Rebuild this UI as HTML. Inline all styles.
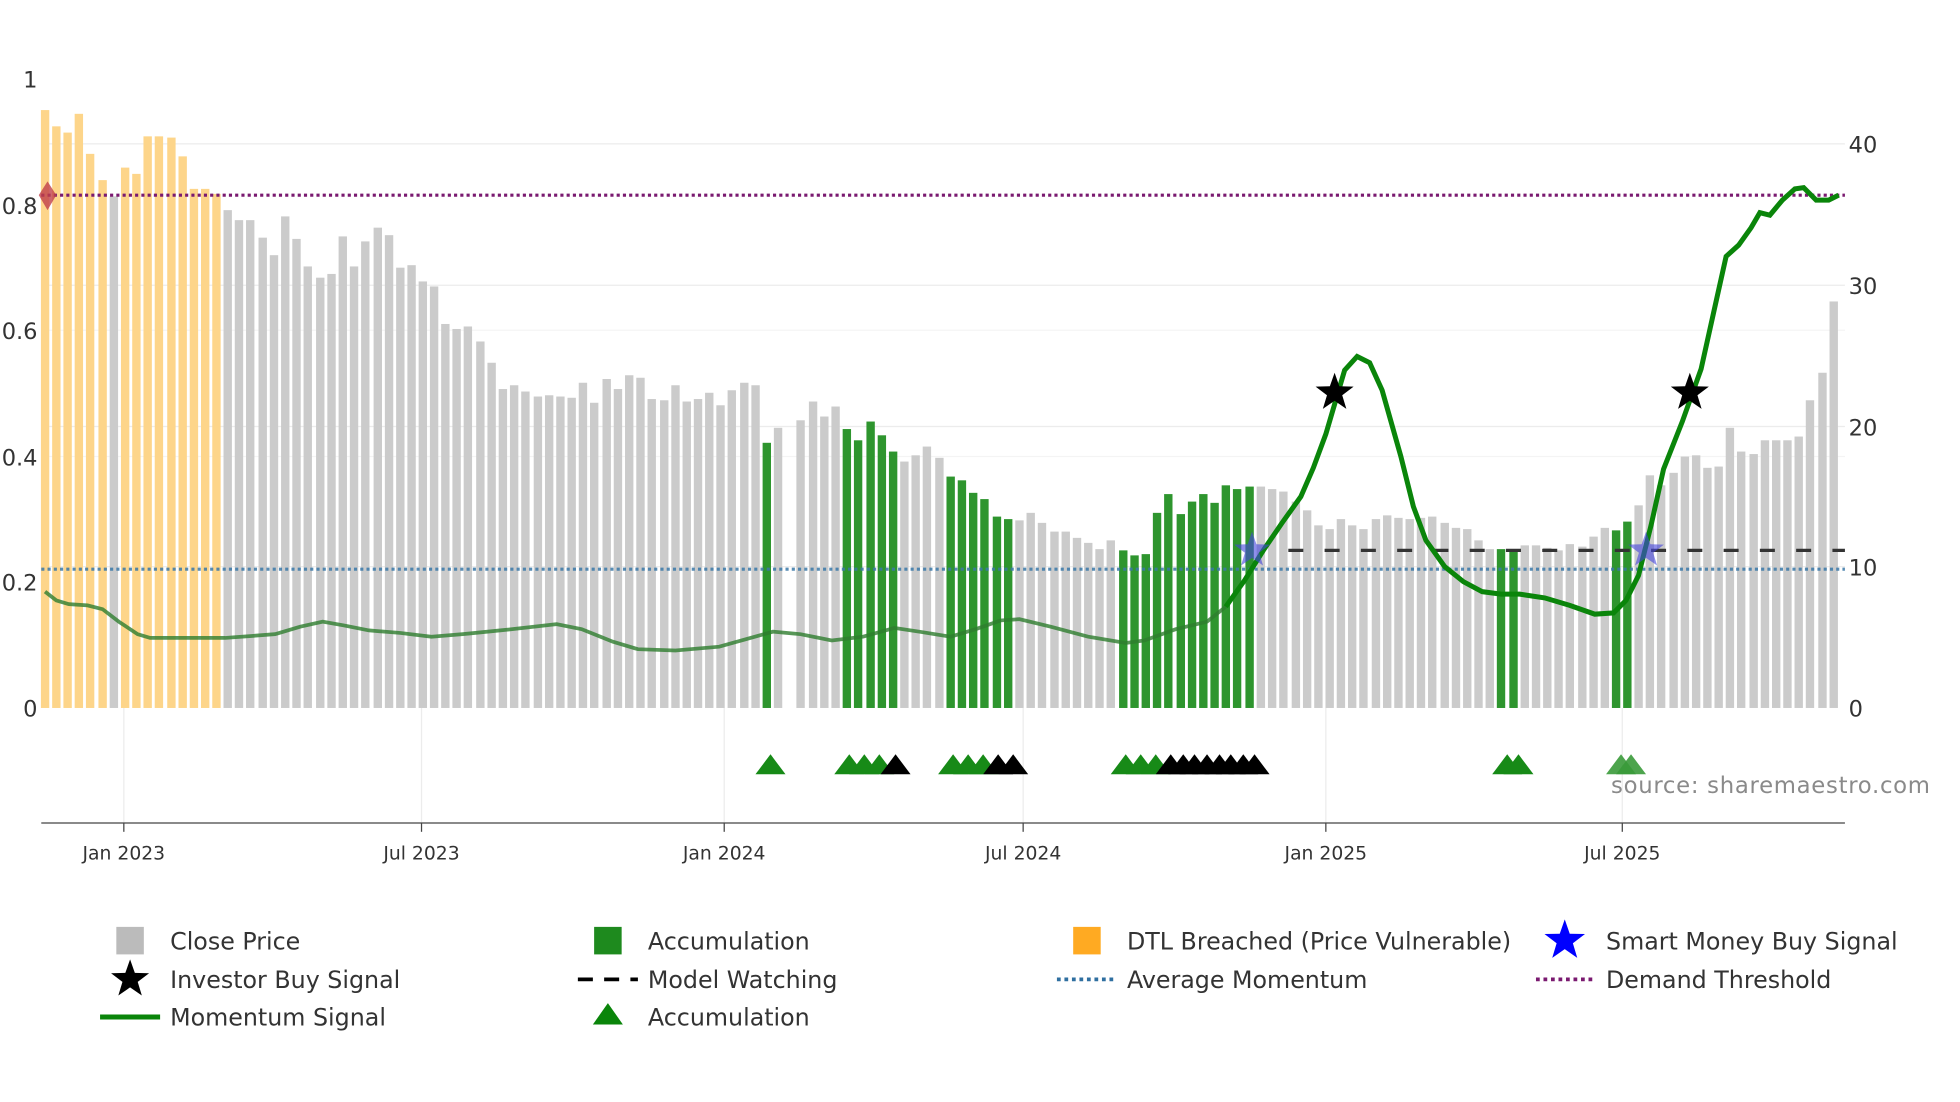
<!DOCTYPE html>
<html><head><meta charset="utf-8"><style>
html,body{margin:0;padding:0;background:#fff;width:1960px;height:1102px;overflow:hidden}
svg{display:block;font-family:"DejaVu Sans","Liberation Sans",sans-serif}
</style></head><body>
<svg id="s" width="1960" height="1102" viewBox="0 0 1567 881" preserveAspectRatio="none" xmlns="http://www.w3.org/2000/svg">
<g stroke="#ececec" stroke-width="1">
<line x1="33" y1="453" x2="1475" y2="453"/><line x1="33" y1="341" x2="1475" y2="341"/>
<line x1="33" y1="228" x2="1475" y2="228"/><line x1="33" y1="115" x2="1475" y2="115"/>
<line x1="33" y1="365" x2="1475" y2="365" stroke="#f4f4f4"/><line x1="33" y1="264" x2="1475" y2="264" stroke="#f4f4f4"/>
<line x1="99" y1="566" x2="99" y2="658"/><line x1="337" y1="566" x2="337" y2="658"/><line x1="579" y1="566" x2="579" y2="658"/>
<line x1="818" y1="566" x2="818" y2="658"/><line x1="1060" y1="566" x2="1060" y2="658"/><line x1="1297" y1="566" x2="1297" y2="658"/>
</g>
<g id="bars"></g>
<line x1="33" y1="455" x2="1475" y2="455" stroke="#3a78a8" stroke-width="2.5" stroke-dasharray="2.5,2.5" opacity="0.85"/>
<line x1="1030" y1="440" x2="1475" y2="440" stroke="#333" stroke-width="2.5" stroke-dasharray="12,17"/>
<line x1="33" y1="156" x2="1475" y2="156" stroke="#7a1a70" stroke-width="2.5" stroke-dasharray="2.5,2.5"/>
<path id="m1" fill="none" stroke="#2e7d2e" stroke-width="3" opacity="0.8"/>
<path id="m2" fill="none" stroke="#0a850a" stroke-width="4"/>
<path d="M38,145 L45,156 L38,168 L31,156Z" fill="#c0404a" opacity="0.8"/>
<g id="stars"></g>
<g id="tri"></g>
<line x1="33" y1="658" x2="1475" y2="658" stroke="#444" stroke-width="1"/>
<g stroke="#444"><line x1="99" y1="658" x2="99" y2="665"/><line x1="337" y1="658" x2="337" y2="665"/><line x1="579" y1="658" x2="579" y2="665"/><line x1="818" y1="658" x2="818" y2="665"/><line x1="1060" y1="658" x2="1060" y2="665"/><line x1="1297" y1="658" x2="1297" y2="665"/></g>
<g font-size="15" fill="#333" text-anchor="middle">
<text x="99" y="687">Jan 2023</text><text x="337" y="687">Jul 2023</text><text x="579" y="687">Jan 2024</text>
<text x="818" y="687">Jul 2024</text><text x="1060" y="687">Jan 2025</text><text x="1297" y="687">Jul 2025</text>
</g>
<g font-size="18" fill="#333" text-anchor="end">
<text x="30" y="70">1</text><text x="30" y="171">0.8</text><text x="30" y="271">0.6</text><text x="30" y="372">0.4</text><text x="30" y="472">0.2</text><text x="30" y="573">0</text>
</g>
<g font-size="18" fill="#333">
<text x="1478" y="122">40</text><text x="1478" y="235">30</text><text x="1478" y="348">20</text><text x="1478" y="460">10</text><text x="1478" y="573">0</text>
</g>
<text x="1288" y="634" font-size="18.2" fill="#8a8a8a" textLength="255">source: sharemaestro.com</text>
<g font-size="19" fill="#333">
<rect x="93" y="741" width="22" height="22" fill="#bbb"/><text x="136" y="759">Close Price</text>
<rect x="475" y="741" width="22" height="22" fill="#1e8a1e"/><text x="518" y="759">Accumulation</text>
<rect x="858" y="741" width="22" height="22" fill="#ffaa22"/><text x="901" y="759">DTL Breached (Price Vulnerable)</text>
<text x="1284" y="759">Smart Money Buy Signal</text>
<text x="136" y="790">Investor Buy Signal</text>
<line x1="462" y1="783" x2="510" y2="783" stroke="#000" stroke-width="3" stroke-dasharray="12,9"/><text x="518" y="790">Model Watching</text>
<line x1="845" y1="783" x2="892" y2="783" stroke="#2f6fa0" stroke-width="3" stroke-dasharray="3,3"/><text x="901" y="790">Average Momentum</text>
<line x1="1228" y1="783" x2="1275" y2="783" stroke="#7a1a70" stroke-width="3" stroke-dasharray="3,3"/><text x="1284" y="790">Demand Threshold</text>
<line x1="80" y1="813" x2="128" y2="813" stroke="#0a850a" stroke-width="4"/><text x="136" y="820">Momentum Signal</text>
<path d="M474,819 L486,802 L498,819Z" fill="#0a850a"/><text x="518" y="820">Accumulation</text>
</g>
<g id="lstars"></g>
</svg>
<script>
var NS="http://www.w3.org/2000/svg";
function el(p,t,a){var e=document.createElementNS(NS,t);for(var k in a)e.setAttribute(k,a[k]);p.appendChild(e);return e;}
var d=[[36,88,'y'],[45,101,'y'],[54,106,'y'],[63,91,'y'],[72,123,'y'],[82,144,'y'],[91,157,'g'],[100,134,'y'],[109,139,'y'],[118,109,'y'],[127,109,'y'],[137,110,'y'],[146,125,'y'],[155,151,'y'],[164,151,'y'],[173,155,'y'],
[182,168],[191,176],[200,176],[210,190],[219,204],[228,173],[237,191],[246,213],[256,222],[265,219],[274,189],[283,213],[292,193],[302,182],[311,188],[320,214],[329,212],[338,225],[347,229],[356,259],[365,263],[374,261],[384,273],[393,290],[402,311],[411,308],[420,313],[430,317],[439,316],[448,317],[457,318],[466,306],[475,322],[485,303],[494,311],[503,300],[512,302],[521,319],[531,320],[540,308],[549,321],[558,319],[567,314],[576,324],[585,312],[595,306],[604,308],[613,354,'G'],[622,342],[640,336],[650,321],[659,333],[668,325],[677,343,'G'],[686,352,'G'],[696,337,'G'],[705,348,'G'],[714,361,'G'],[723,369],[732,364],[741,357],[751,366],[760,381,'G'],[769,384,'G'],[778,394,'G'],[787,399,'G'],[797,413,'G'],[806,415,'G'],[815,416],[824,410],[833,418],[843,425],[852,425],[861,430],[870,434],[879,439],[888,432],[898,440,'G'],[907,444,'G'],[916,443,'G'],[925,410,'G'],[934,395,'G'],[944,411,'G'],[953,401,'G'],[962,395,'G'],[971,402,'G'],[980,388,'G'],[989,391,'G'],[999,389,'G'],[1008,389],[1017,391],[1026,393],[1036,401],[1045,408],[1054,420],[1063,423],[1072,415],[1081,420],[1090,423],[1100,415],[1109,412],[1118,414],[1127,415],[1136,414],[1145,413],[1155,418],[1164,422],[1173,423],[1182,432],[1191,439],[1200,439,'G'],[1210,439,'G'],[1219,436],[1228,436],[1237,438],[1246,440],[1255,435],[1265,437],[1274,429],[1283,422],[1292,424,'G'],[1301,417,'G'],[1310,404],[1319,380],[1328,388],[1338,378],[1347,365],[1356,364],[1365,374],[1374,373],[1383,342],[1392,361],[1402,363],[1411,352],[1420,352],[1429,352],[1438,349],[1447,320],[1457,298],[1466,241]];
var b=document.getElementById('bars');
d.forEach(function(r){var c=r[2]=='y'?'#fdd58a':r[2]=='G'?'#2e952e':'#cbcbcb';el(b,'rect',{x:r[0]-3.3,y:r[1],width:6.7,height:566-r[1],fill:c});});
var pts=[[36,473],[45,480],[55,483],[70,484],[82,487],[95,497],[110,507],[120,510],[140,510],[180,510],[220,507],[240,501],[258,497],[275,500],[295,504],[320,506],[345,509],[370,507],[400,504],[445,499],[465,503],[490,513],[510,519],[540,520],[575,517],[600,510],[618,505],[640,507],[665,512],[690,509],[715,502],[735,505],[760,509],[780,503],[800,496],[815,495],[840,501],[870,509],[900,514],[915,512],[940,503],[965,497],[980,485],[995,464],[1010,440],[1025,418],[1040,397],[1050,374],[1060,347],[1075,296],[1085,285],[1095,290],[1105,312],[1120,365],[1130,405],[1140,432],[1155,453],[1170,465],[1185,473],[1200,475],[1215,475],[1235,478],[1255,484],[1275,491],[1290,490],[1300,480],[1310,460],[1320,420],[1330,375],[1345,337],[1360,295],[1370,250],[1380,205],[1390,196],[1400,182],[1407,170],[1415,172],[1425,160],[1435,151],[1442,150],[1452,160],[1462,160],[1470,156]];
var p1=[],p2=[];pts.forEach(function(p){if(p[0]<=980)p1.push(p);if(p[0]>=980)p2.push(p);});
function pd(a){return 'M'+a.map(function(p){return p[0]+','+p[1]}).join(' L');}
document.getElementById('m1').setAttribute('d',pd(p1));document.getElementById('m2').setAttribute('d',pd(p2));
function star(g,cx,cy,R,fill,op){var s='';for(var i=0;i<10;i++){var r=i%2?R*0.4:R,a=-Math.PI/2+i*Math.PI/5;s+=(i?'L':'M')+(cx+r*Math.cos(a)).toFixed(1)+','+(cy+r*Math.sin(a)).toFixed(1);}el(g,'path',{d:s+'Z',fill:fill,opacity:op||1});}
var sg=document.getElementById('stars');
star(sg,1001,440,15,'#4444dd',0.6);star(sg,1316,440,15,'#4444dd',0.6);
star(sg,1067,314,16,'#000');star(sg,1351,314,16,'#000');
var lg=document.getElementById('lstars');star(lg,1251,752,17,'#0000ff');star(lg,104,783,16,'#000');
var tg=document.getElementById('tri');
function tri(x,c,o){el(tg,'path',{d:'M'+(x-12)+',619 L'+x+',603 L'+(x+12)+',619Z',fill:c,opacity:o||1});}
[616,679,691,703].forEach(function(x){tri(x,'#178a17')});tri(716,'#000');
[762,774,786].forEach(function(x){tri(x,'#178a17')});[798,810].forEach(function(x){tri(x,'#000')});
[900,912,924].forEach(function(x){tri(x,'#178a17')});[936,946,955,965,975,984,994,1003].forEach(function(x){tri(x,'#000')});
[1205,1214].forEach(function(x){tri(x,'#178a17')});[1296,1304].forEach(function(x){tri(x,'#3a9a3a',0.9)});
</script>
</body></html>
